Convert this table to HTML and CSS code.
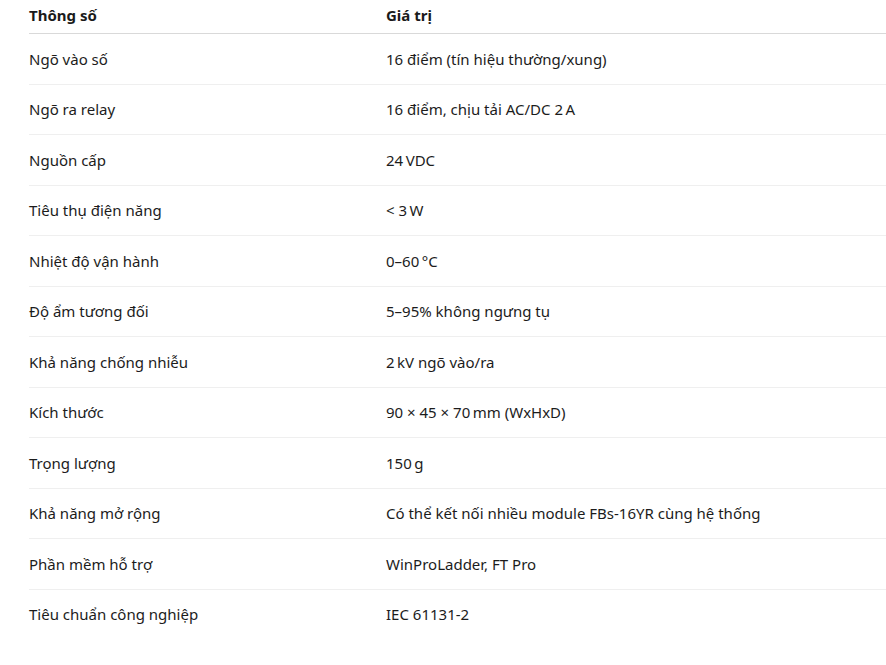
FILE: index.html
```html
<!DOCTYPE html>
<html lang="vi">
<head>
<meta charset="utf-8">
<title>Thông số kỹ thuật</title>
<link rel="stylesheet" href="styles.css">
</head>
<body>
<div class="wrap">
<table class="spec">
<colgroup><col class="c1"><col class="c2"></colgroup>
<thead>
<tr><th>Thông số</th><th>Giá trị</th></tr>
</thead>
<tbody>
<tr><td>Ngõ vào số</td><td>16 điểm (tín hiệu thường/xung)</td></tr>
<tr><td>Ngõ ra relay</td><td>16 điểm, chịu tải AC/DC 2&#8239;A</td></tr>
<tr><td>Nguồn cấp</td><td>24&#8239;VDC</td></tr>
<tr><td>Tiêu thụ điện năng</td><td>&lt; 3&#8239;W</td></tr>
<tr><td>Nhiệt độ vận hành</td><td>0–60&#8239;°C</td></tr>
<tr><td>Độ ẩm tương đối</td><td>5–95% không ngưng tụ</td></tr>
<tr><td>Khả năng chống nhiễu</td><td>2&#8239;kV ngõ vào/ra</td></tr>
<tr><td>Kích thước</td><td>90 × 45 × 70&#8239;mm (WxHxD)</td></tr>
<tr><td>Trọng lượng</td><td>150&#8239;g</td></tr>
<tr><td>Khả năng mở rộng</td><td>Có thể kết nối nhiều module FBs-16YR cùng hệ thống</td></tr>
<tr><td>Phần mềm hỗ trợ</td><td>WinProLadder, FT Pro</td></tr>
<tr><td>Tiêu chuẩn công nghiệp</td><td>IEC 61131-2</td></tr>
</tbody>
</table>
</div>
</body>
</html>
```
FILE: styles.css
```css
html, body {
  margin: 0;
  padding: 0;
  background: #ffffff;
  overflow: hidden;
}
body {
  font-family: "Noto Sans", "Open Sans", sans-serif;
  font-size: 15px;
  color: #1c1c1c;
}
.wrap {
  padding-left: 29px;
}
.spec {
  width: 857px;
  border-collapse: collapse;
  table-layout: fixed;
}
.spec .c1 { width: 357px; }
.spec th {
  text-align: left;
  font-weight: 700;
  line-height: 24px;
  padding: 3px 0 6px 0;
  border-bottom: 1px solid #d9d9d9;
  color: #1a1a1a;
}
.spec td {
  line-height: 24px;
  padding: 12.76px 0;
  border-bottom: 1px solid #efefef;
}
.spec tbody tr:last-child td {
  border-bottom: none;
}
```
